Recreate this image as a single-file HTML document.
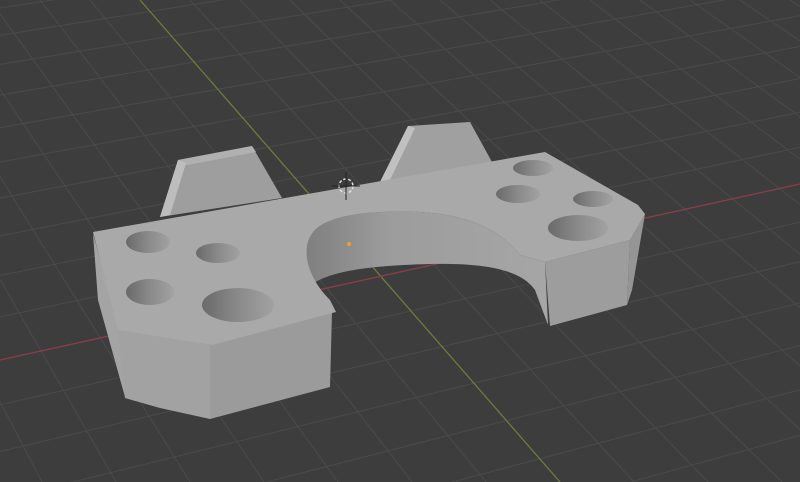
<!DOCTYPE html>
<html><head><style>html,body{margin:0;padding:0;background:#3d3d3d;overflow:hidden;width:800px;height:482px}svg{display:block}</style></head>
<body>
<svg id="s" width="800" height="482" viewBox="0 0 800 482" xmlns="http://www.w3.org/2000/svg">
<defs>
<linearGradient id="hole" x1="0" y1="0" x2="1" y2="0">
<stop offset="0" stop-color="#6a6a6a"/><stop offset="0.5" stop-color="#8a8a8a"/><stop offset="1" stop-color="#a2a2a2"/>
</linearGradient>
<linearGradient id="arc" x1="0" y1="0" x2="1" y2="0">
<stop offset="0" stop-color="#7e7e7e"/><stop offset="0.35" stop-color="#9c9c9c"/><stop offset="1" stop-color="#a6a6a6"/>
</linearGradient>
</defs>
<rect width="800" height="482" fill="#3d3d3d"/>
<g id="grid" stroke="#4a4a4a" stroke-width="1"></g>
<line x1="140" y1="0" x2="560" y2="482" stroke="#6b7d3a" stroke-width="1.3"/>
<line x1="0" y1="360" x2="800" y2="184" stroke="#8a3f44" stroke-width="1.3"/>
<!-- tabs -->
<polygon points="160,217 178,160 252,146 282,198" fill="#9e9e9e"/>
<polygon points="178,160 252,146 256,152 182,166" fill="#b0b0b0"/>
<polygon points="160,217 178,160 186,163 170,215" fill="#bdbdbd"/>
<polygon points="380,182 408,126 470,122 492,162" fill="#a0a0a0"/>
<polygon points="380,182 408,126 415,128 390,180" fill="#c0c0c0"/>
<!-- left front faces -->
<polygon points="93,234 120,330 125,397 98,300" fill="#a4a4a4"/>
<polygon points="118,328 212,345 210,419 160,408 125,398" fill="#a2a2a2"/>
<polygon points="210,345 332,312 330,387 210,419" fill="#9b9b9b"/>
<!-- arc interior wall -->
<path d="M520,255 C500,230 470,215 420,212 C370,210 330,215 315,230 C305,240 302,255 303,275 L305,290 C320,275 350,266 430,264 C480,263 520,268 535,290 L548,325 L545,262 Z" fill="url(#arc)"/>
<!-- right block faces -->
<polygon points="545,262 630,240 627,305 550,326" fill="#9d9d9d"/>
<polygon points="630,240 645,214 632,290 627,305" fill="#959595"/>
<!-- top face -->
<path d="M93,232 L545,152 L638,205 L645,214 L630,240 L545,262 L520,255 C500,230 470,215 420,212 C370,210 330,215 315,230 C300,245 305,275 330,300 L336,312 L212,345 L118,330 Z" fill="#a9a9a9"/>
<!-- holes -->
<g>
<ellipse cx="148" cy="242" rx="22" ry="11" fill="url(#hole)"/>
<ellipse cx="218" cy="253" rx="22" ry="10" fill="url(#hole)"/>
<ellipse cx="150" cy="292" rx="24" ry="13" fill="url(#hole)"/>
<ellipse cx="238" cy="305" rx="36" ry="17" fill="url(#hole)"/>
<ellipse cx="533" cy="168" rx="20" ry="8" fill="url(#hole)"/>
<ellipse cx="518" cy="194" rx="22" ry="9" fill="url(#hole)"/>
<ellipse cx="593" cy="199" rx="20" ry="8" fill="url(#hole)"/>
<ellipse cx="578" cy="228" rx="30" ry="13" fill="url(#hole)"/>
</g>
<!-- cursor -->
<circle cx="346" cy="186" r="7" fill="none" stroke="#e0e0e0" stroke-width="1.5" stroke-dasharray="3 2"/>
<line x1="346" y1="172" x2="346" y2="200" stroke="#222" stroke-width="1"/>
<line x1="332" y1="186" x2="360" y2="186" stroke="#222" stroke-width="1"/>
<circle cx="349" cy="244" r="2" fill="#f0a030"/>
</svg>
<script>
var g=document.getElementById('grid'),ns='http://www.w3.org/2000/svg';
function L(a,b,c,d){var l=document.createElementNS(ns,'line');l.setAttribute('x1',a);l.setAttribute('y1',b);l.setAttribute('x2',c);l.setAttribute('y2',d);g.appendChild(l);}
for(var i=-20;i<=20;i++){var o=i*62;L(140+o-0.3*i*40,0,560+o+i*12,482);}
for(var j=-20;j<=20;j++){var o=j*44;L(0,360+o*(1+j*0.02),800,184+o*(1+j*0.02)*0.85);}
</script>
</body></html>
